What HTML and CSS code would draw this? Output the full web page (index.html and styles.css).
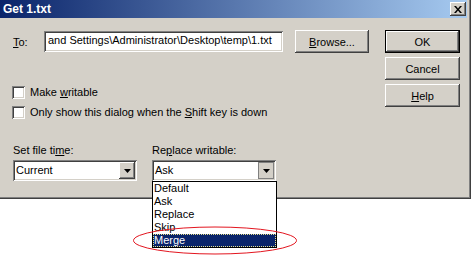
FILE: index.html
```html
<!DOCTYPE html>
<html lang="en">
<head>
    <meta charset="UTF-8">
    <title>Get 1.txt</title>
    <link rel="stylesheet" href="styles.css">
</head>
<body>

<div class="screen">
  <div class="window">
    <div class="titlebar">
      <span class="title">Get 1.txt</span>
      <span class="close-btn">
        <svg width="8" height="7" viewBox="0 0 8 7"><path d="M0 0h2l2 2.5L6 0h2L5 3.5 8 7H6L4 4.5 2 7H0l3-3.5z" fill="#000"/></svg>
      </span>
    </div>

    <div class="body">
      <div class="main">
        <div class="to-row">
          <span class="to-label"><u>T</u>o:</span>
          <div class="text-input">and Settings\Administrator\Desktop\temp\1.txt</div>
          <div class="btn browse"><span><u>B</u>rowse...</span></div>
        </div>

        <div class="checks">
          <div class="check"><span class="box"></span><span>Make <u>w</u>ritable</span></div>
          <div class="check"><span class="box"></span><span>Only show this dialog when the <u>S</u>hift key is down</span></div>
        </div>

        <div class="combos">
          <div class="field">
            <div class="field-label">Set file ti<u>m</u>e:</div>
            <div class="select">
              <span class="select-value">Current</span>
              <span class="arrow-btn">
                <svg width="7" height="4" viewBox="0 0 7 4"><path d="M0 0h7L3.5 4z" fill="#000"/></svg>
              </span>
            </div>
          </div>
          <div class="field">
            <div class="field-label">Re<u>p</u>lace writable:</div>
            <div class="select">
              <span class="select-value">Ask</span>
              <span class="arrow-btn pressed">
                <svg width="7" height="4" viewBox="0 0 7 4"><path d="M0 0h7L3.5 4z" fill="#000"/></svg>
              </span>
            </div>
          </div>
        </div>
      </div>

      <div class="side">
        <div class="btn default">OK</div>
        <div class="btn">Cancel</div>
        <div class="btn"><span><u>H</u>elp</span></div>
      </div>
    </div>
  </div>

  <!-- open dropdown of "Replace writable" -->
  <ul class="dropdown">
    <li>Default</li>
    <li>Ask</li>
    <li>Replace</li>
    <li>Skip</li>
    <li class="selected">Merge</li>
  </ul>

  <svg class="mark" width="166" height="30" viewBox="0 0 166 30">
    <ellipse cx="83" cy="14.5" rx="81.5" ry="13.5" fill="none" stroke="#e3151f" stroke-width="1"/>
  </svg>
</div>

</body>
</html>
```

FILE: styles.css
```css
/* Global styles */

* {
  box-sizing: border-box;
  margin: 0;
  padding: 0;
}

body {
  font-family: "Liberation Sans", Arial, sans-serif;
  font-size: 11px;
  color: #000;
  background-color: #fff;
}

u {
  text-decoration: underline;
  text-underline-offset: 1px;
}

.screen {
  position: relative;
  width: 471px;
  height: 260px;
}

/* Window frame */

.window {
  width: 471px;
  height: 199px;
  background-color: #d4d0c8;
  border-right: 1px solid #404040;
  border-bottom: 1px solid #404040;
  box-shadow: inset -1px -1px #808080;
}

.titlebar {
  height: 18px;
  margin-right: 3px;
  padding: 0 1px 0 3px;
  display: flex;
  align-items: center;
  justify-content: space-between;
  background: linear-gradient(to right, #0a246a, #a6caf0);
  color: #fff;
  font-weight: bold;
  font-size: 12px;
}

.close-btn {
  width: 16px;
  height: 14px;
  display: flex;
  align-items: center;
  justify-content: center;
  background-color: #d4d0c8;
  box-shadow: inset -1px -1px #404040, inset 1px 1px #fff, inset -2px -2px #808080;
}

/* Dialog body */

.body {
  display: flex;
  padding: 12px 0 0 13px;
}

.main {
  width: 356px;
}

.to-row {
  display: flex;
  align-items: center;
  height: 23px;
}

.to-label {
  width: 31px;
}

.text-input {
  width: 239px;
  height: 21px;
  padding-left: 4px;
  line-height: 19px;
  white-space: nowrap;
  overflow: hidden;
  background-color: #fff;
  box-shadow: inset 1px 1px #808080, inset -1px -1px #fff, inset 2px 2px #404040, inset -2px -2px #d4d0c8;
}

.btn {
  width: 75px;
  height: 23px;
  display: flex;
  align-items: center;
  justify-content: center;
  background-color: #d4d0c8;
  box-shadow: inset -1px -1px #404040, inset 1px 1px #fff, inset -2px -2px #808080;
}

.browse {
  width: 74px;
  margin-left: 12px;
}

.btn.default {
  border: 1px solid #000;
}

.side {
  margin-left: 16px;
  display: flex;
  flex-direction: column;
  gap: 4px;
}

/* Checkboxes */

.checks {
  margin-top: 29px;
}

.check {
  display: flex;
  align-items: center;
  gap: 5px;
  height: 20px;
  margin-left: -1px;
}

.box {
  width: 13px;
  height: 13px;
  background-color: #fff;
  box-shadow: inset 1px 1px #808080, inset -1px -1px #fff, inset 2px 2px #404040, inset -2px -2px #d4d0c8;
}

/* Combo boxes */

.combos {
  display: flex;
  gap: 15px;
  margin-top: 22px;
}

.field {
  width: 124px;
}

.field-label {
  height: 13px;
  line-height: 13px;
  margin-bottom: 3px;
}

.select {
  height: 21px;
  padding: 2px;
  display: flex;
  background-color: #fff;
  box-shadow: inset 1px 1px #808080, inset -1px -1px #fff, inset 2px 2px #404040, inset -2px -2px #d4d0c8;
}

.select-value {
  flex: 1;
  padding-left: 1px;
  line-height: 17px;
}

.arrow-btn {
  width: 16px;
  height: 17px;
  display: flex;
  align-items: center;
  justify-content: center;
  background-color: #d4d0c8;
  box-shadow: inset -1px -1px #404040, inset 1px 1px #fff, inset -2px -2px #808080;
}

.arrow-btn.pressed {
  border: 1px solid #808080;
  box-shadow: none;
  padding: 1px 0 0 1px;
}

/* Open list (overlay) */

.dropdown {
  position: absolute;
  left: 152px;
  top: 181px;
  width: 125px;
  height: 67px;
  list-style: none;
  background-color: #fff;
  border: 1px solid #000;
}

.dropdown li {
  height: 13px;
  line-height: 13px;
  padding-left: 1px;
}

.dropdown li.selected {
  background-color: #0a246a;
  color: #fff;
  outline: 1px dotted #e8e08a;
  outline-offset: -1px;
}

.mark {
  position: absolute;
  left: 132px;
  top: 226px;
}
```
